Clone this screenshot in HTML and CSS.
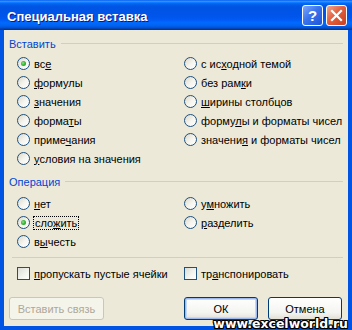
FILE: index.html
```html
<!DOCTYPE html>
<html lang="ru">
<head>
    <meta charset="UTF-8">
    <title>Специальная вставка</title>
    <link rel="stylesheet" href="styles.css">
</head>
<body>
    <div class="window">
        <div class="titlebar">
            <span class="title">Специальная вставка</span>
            <div class="title-buttons">
                <span class="tbtn help">?</span>
                <span class="tbtn close">
                    <svg width="13" height="13" viewBox="0 0 13 13">
                        <path d="M2 2 L11 11 M11 2 L2 11" stroke="#fff" stroke-width="2.2" stroke-linecap="square"/>
                    </svg>
                </span>
            </div>
        </div>

        <div class="content">
            <div class="group-head"><span>Вставить</span></div>
            <div class="options paste">
                <label class="opt"><span class="radio checked"></span><span>вс<u>е</u></span></label>
                <label class="opt"><span class="radio"></span><span>с ис<u>х</u>одной темой</span></label>
                <label class="opt"><span class="radio"></span><span><u>ф</u>ормулы</span></label>
                <label class="opt"><span class="radio"></span><span>без рам<u>к</u>и</span></label>
                <label class="opt"><span class="radio"></span><span><u>з</u>начения</span></label>
                <label class="opt"><span class="radio"></span><span><u>ш</u>ирины столбцов</span></label>
                <label class="opt"><span class="radio"></span><span>форма<u>т</u>ы</span></label>
                <label class="opt"><span class="radio"></span><span>форму<u>л</u>ы и форматы чисел</span></label>
                <label class="opt"><span class="radio"></span><span>приме<u>ч</u>ания</span></label>
                <label class="opt"><span class="radio"></span><span>значени<u>я</u> и форматы чисел</span></label>
                <label class="opt"><span class="radio"></span><span><u>у</u>словия на значения</span></label>
            </div>

            <div class="group-head op-head"><span>Операция</span></div>
            <div class="options ops">
                <label class="opt"><span class="radio"></span><span><u>н</u>ет</span></label>
                <label class="opt"><span class="radio"></span><span>у<u>м</u>ножить</span></label>
                <label class="opt"><span class="radio checked"></span><span class="focus">сло<u>ж</u>ить</span></label>
                <label class="opt"><span class="radio"></span><span><u>р</u>азделить</span></label>
                <label class="opt"><span class="radio"></span><span>в<u>ы</u>честь</span></label>
            </div>

            <div class="separator"></div>

            <div class="options checks">
                <label class="opt"><span class="check"></span><span><u>п</u>ропускать пустые ячейки</span></label>
                <label class="opt"><span class="check"></span><span>тр<u>а</u>нспонировать</span></label>
            </div>

            <div class="buttons">
                <button class="btn link-btn" disabled>Вставить связь</button>
                <div class="right-buttons">
                    <button class="btn default">ОК</button>
                    <button class="btn">Отмена</button>
                </div>
            </div>
        </div>

        <div class="watermark">www.excelworld.ru</div>
    </div>
</body>
</html>
```

FILE: styles.css
```css
body {
    margin: 0;
    font-family: "Liberation Sans", Arial, sans-serif;
    font-size: 11px;
}
.window {
    position: relative;
    width: 352px;
    height: 330px;
    box-sizing: border-box;
    padding: 0 4px 4px 4px;
    background: #0054e3;
    display: flex;
    flex-direction: column;
    overflow: hidden;
}
.titlebar {
    height: 30px;
    margin: 0 -4px;
    padding: 0 5px 0 7px;
    display: flex;
    align-items: center;
    justify-content: space-between;
    background: linear-gradient(#0058ee 0%, #3593ff 4%, #288eff 6%, #127dff 8%, #036ffc 10%, #0262ee 14%, #0057e5 20%, #0054e3 24%, #0055eb 56%, #005bf5 66%, #026afe 76%, #0062ef 86%, #0052d6 92%, #0040ab 96%, #003092 100%);
}
.title {
    color: #fff;
    font-weight: bold;
    font-size: 13px;
    text-shadow: 1px 1px 0 #0a1883;
    padding-top: 2px;
}
.title-buttons {
    display: flex;
    gap: 3px;
    padding-top: 1px;
}
.tbtn {
    width: 19px;
    height: 19px;
    border: 1px solid #fff;
    border-radius: 3px;
    display: flex;
    align-items: center;
    justify-content: center;
    color: #fff;
}
.help {
    background: linear-gradient(135deg, #7ea6fb 0%, #3a74ec 45%, #1e55d8 100%);
    font-weight: bold;
    font-size: 15px;
}
.close {
    background: linear-gradient(135deg, #f1a48c 0%, #e2603f 45%, #c8401f 100%);
}
.content {
    flex: 1;
    background: #ece9d8;
    padding: 6px 5px 0 5px;
}
.group-head {
    height: 15px;
    display: flex;
    align-items: center;
    color: #0046d5;
}
.group-head::after {
    content: "";
    flex: 1;
    height: 1px;
    margin-left: 5px;
    background: #d0d0bf;
}
.op-head {
    margin-top: 6px;
}
.options {
    display: grid;
    grid-template-columns: 167px 1fr;
    padding-left: 8px;
}
.paste {
    margin-top: 3px;
}
.ops {
    margin-top: 5px;
}
.opt {
    height: 19px;
    display: flex;
    align-items: center;
    white-space: nowrap;
}
.radio {
    width: 11px;
    height: 11px;
    border: 1px solid #1c5180;
    border-radius: 50%;
    margin-right: 4px;
    background: linear-gradient(135deg, #dcd9c9 0%, #f6f5f0 55%, #ffffff 100%);
    display: flex;
    align-items: center;
    justify-content: center;
}
.radio.checked::after {
    content: "";
    width: 5px;
    height: 5px;
    border-radius: 50%;
    background: radial-gradient(circle at 40% 40%, #8fe08f 0%, #31b431 50%, #1e8e1e 100%);
}
.check {
    width: 11px;
    height: 11px;
    border: 1px solid #1c5180;
    margin-right: 4px;
    background: linear-gradient(135deg, #dcdcd7 0%, #f4f4f0 60%, #ffffff 100%);
}
.focus {
    outline: 1px dotted #000;
    padding: 0 1px;
}
.separator {
    height: 1px;
    background: #d0d0bf;
    margin: 6px 0 6px 3px;
}
.buttons {
    margin-top: 14px;
    display: flex;
    justify-content: space-between;
    padding-right: 1px;
}
.right-buttons {
    display: flex;
    gap: 10px;
}
.btn {
    height: 23px;
    width: 74px;
    border: 1px solid #003c74;
    border-radius: 3px;
    background: linear-gradient(#ffffff 0%, #f4f4f0 70%, #e3e0d5 100%);
    font-family: "Liberation Sans", Arial, sans-serif;
    font-size: 11px;
    color: #000;
    padding: 0;
}
.default {
    box-shadow: inset 0 0 0 1px #9cb8ec, inset 0 0 0 2px #c5d8f8;
}
.link-btn {
    width: 95px;
    border-color: #c9c7ba;
    background: #f5f4ea;
    color: #aca899;
}
.watermark {
    position: absolute;
    right: 4px;
    bottom: 0;
    line-height: 13px;
    font-family: "DejaVu Sans", sans-serif;
    font-weight: bold;
    font-size: 12.5px;
    color: #fff;
    text-shadow: 1px 0 0 #000, -1px 0 0 #000, 0 1px 0 #000, 0 -1px 0 #000, 1px 1px 0 #000, -1px -1px 0 #000, 1px -1px 0 #000, -1px 1px 0 #000;
}
```
